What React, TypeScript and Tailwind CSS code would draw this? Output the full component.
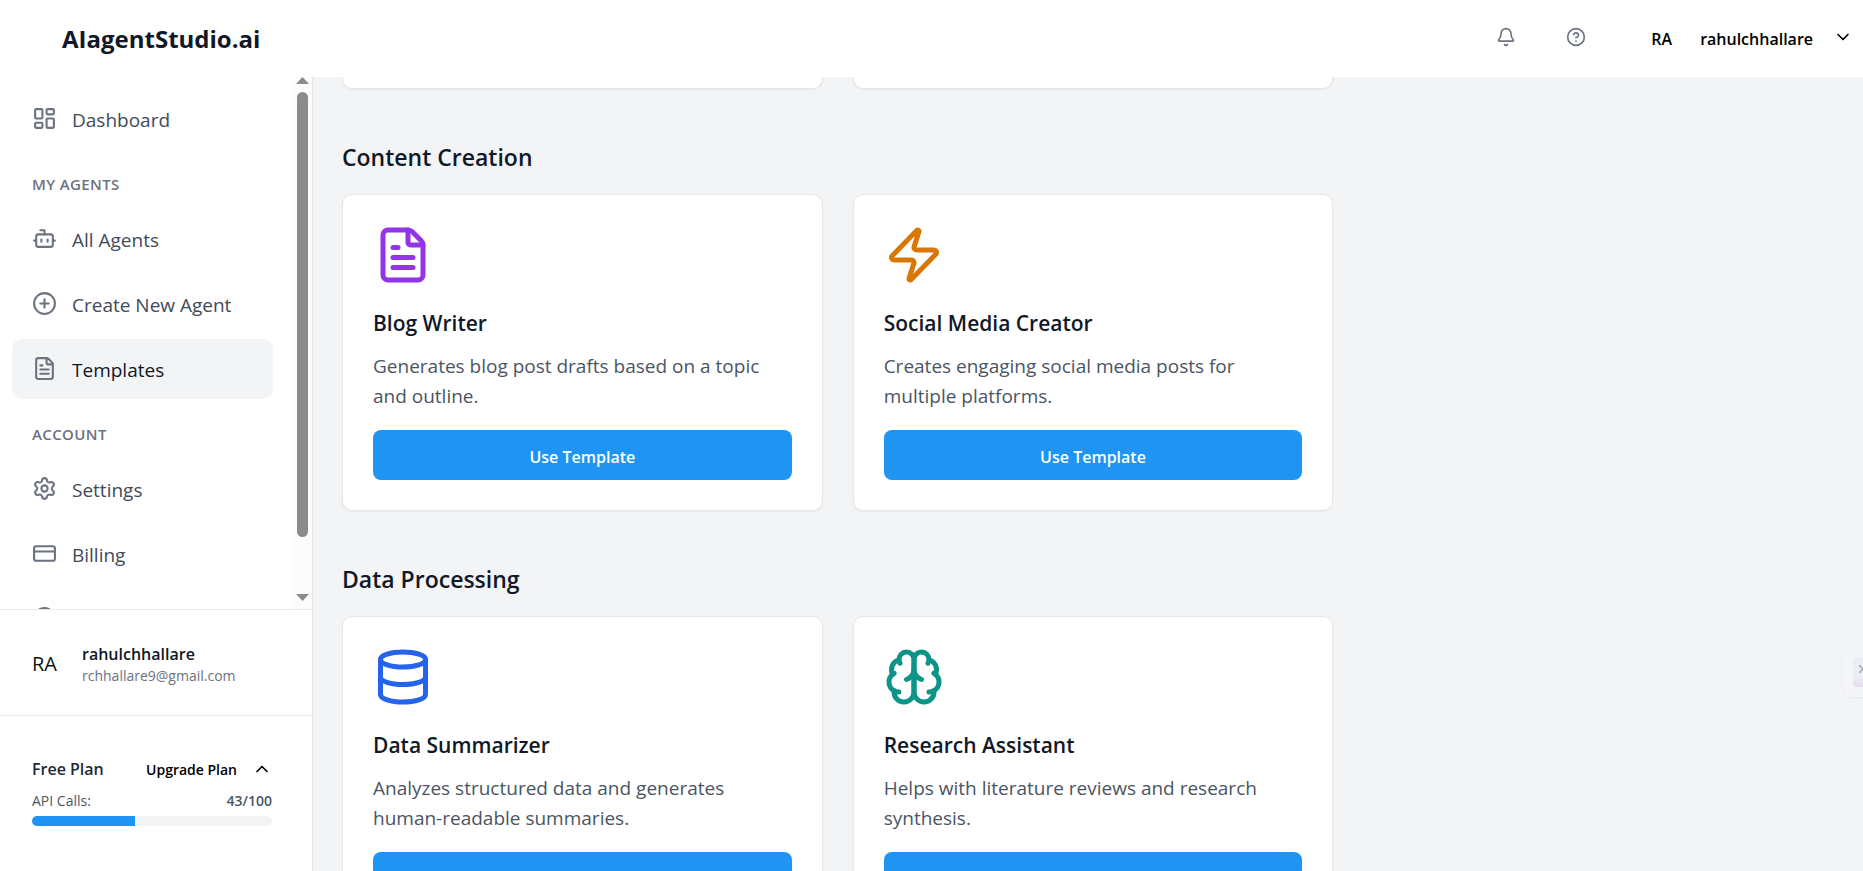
import type { ComponentType, ReactNode } from "react";
import {
  Bell,
  Bot,
  ChevronDown,
  ChevronUp,
  CircleHelp,
  CirclePlus,
  CreditCard,
  Database,
  FileText,
  LayoutDashboard,
  Settings,
  X,
  Zap,
} from "lucide-react";

type IconType = ComponentType<{ size?: number | string; className?: string }>;

type Template = {
  icon: IconType;
  color: string;
  title: string;
  text: string;
};

function BrainIcon({ size = 24, className }: { size?: number | string; className?: string }) {
  return (
    <svg
      width={size}
      height={size}
      viewBox="0 0 24 24"
      fill="none"
      stroke="currentColor"
      strokeWidth="2"
      strokeLinecap="round"
      strokeLinejoin="round"
      className={className}
      aria-hidden="true"
    >
      <path d="M12 5a3 3 0 1 0-5.997.125 4 4 0 0 0-2.526 5.77 4 4 0 0 0 .556 6.588A4 4 0 1 0 12 18Z" />
      <path d="M12 5a3 3 0 1 1 5.997.125 4 4 0 0 1 2.526 5.77 4 4 0 0 1-.556 6.588A4 4 0 1 1 12 18Z" />
      <path d="M15 13a4.5 4.5 0 0 1-3-4 4.5 4.5 0 0 1-3 4" />
      <path d="M17.599 6.5a3 3 0 0 0 .399-1.375" />
      <path d="M6.003 5.125A3 3 0 0 0 6.401 6.5" />
      <path d="M3.477 10.896a4 4 0 0 1 .585-.396" />
      <path d="M19.938 10.5a4 4 0 0 1 .585.396" />
      <path d="M6 18a4 4 0 0 1-1.967-.516" />
      <path d="M19.967 17.484A4 4 0 0 1 18 18" />
    </svg>
  );
}

const sections: { name: string; items: Template[] }[] = [
  {
    name: "Content Creation",
    items: [
      {
        icon: FileText,
        color: "text-[#9333ea]",
        title: "Blog Writer",
        text: "Generates blog post drafts based on a topic and outline.",
      },
      {
        icon: Zap,
        color: "text-[#d97706]",
        title: "Social Media Creator",
        text: "Creates engaging social media posts for multiple platforms.",
      },
    ],
  },
  {
    name: "Data Processing",
    items: [
      {
        icon: Database,
        color: "text-[#2563eb]",
        title: "Data Summarizer",
        text: "Analyzes structured data and generates human-readable summaries.",
      },
      {
        icon: BrainIcon,
        color: "text-[#0d9488]",
        title: "Research Assistant",
        text: "Helps with literature reviews and research synthesis.",
      },
    ],
  },
];

function NavItem({ icon: Icon, label, active = false }: { icon: IconType; label?: string; active?: boolean }) {
  return (
    <a
      href="#"
      aria-label={label ? undefined : "Help"}
      aria-current={active ? "page" : undefined}
      className={
        active
          ? "flex h-[60px] shrink-0 items-center gap-[15px] rounded-[10px] bg-[#f3f4f6] px-5 text-[19px] text-[#111827]"
          : "flex h-[60px] shrink-0 items-center gap-[15px] rounded-[10px] px-5 text-[19px] text-[#414b5a]"
      }
    >
      <Icon size={25} className="mb-[2px] shrink-0 text-[#6b7280]" />
      {label && <span className="pt-[2px]">{label}</span>}
    </a>
  );
}

function NavLabel({ children }: { children: ReactNode }) {
  return (
    <h2 className="px-5 pt-5 pb-[10px] text-[15px] leading-5 font-semibold tracking-wide text-[#6b7280] uppercase">
      {children}
    </h2>
  );
}

function ScrollTrack() {
  return (
    <div className="flex w-[19px] shrink-0 flex-col items-center bg-[#fcfcfc] pb-2" aria-hidden="true">
      <svg width="13" height="7" viewBox="0 0 13 7" fill="#8b8b8b">
        <path d="M6.5 0 13 7H0Z" />
      </svg>
      <div className="mt-2 h-[445px] w-[11px] rounded-full bg-[#8b8b8b]" />
      <svg className="mt-auto" width="13" height="7" viewBox="0 0 13 7" fill="#8b8b8b">
        <path d="M0 0H13L6.5 7Z" />
      </svg>
    </div>
  );
}

function Sidebar() {
  return (
    <aside className="flex w-[313px] shrink-0 flex-col border-r border-[#e5e7eb] bg-white">
      <div className="flex min-h-0 flex-1">
        <nav className="flex min-w-0 flex-1 flex-col gap-[5px] overflow-hidden pt-3 pr-5 pl-3">
          <NavItem icon={LayoutDashboard} label="Dashboard" />
          <NavLabel>My Agents</NavLabel>
          <NavItem icon={Bot} label="All Agents" />
          <NavItem icon={CirclePlus} label="Create New Agent" />
          <NavItem icon={FileText} label="Templates" active />
          <NavLabel>Account</NavLabel>
          <NavItem icon={Settings} label="Settings" />
          <NavItem icon={CreditCard} label="Billing" />
          <NavItem icon={CircleHelp} />
        </nav>
        <ScrollTrack />
      </div>
      <div className="flex h-[106px] items-center gap-[25px] border-t border-[#e5e7eb] px-8 pt-[2px]">
        <span className="text-[20px] text-[#111111]">RA</span>
        <div className="min-w-0">
          <p className="text-[16px] leading-6 font-semibold text-[#111827]">rahulchhallare</p>
          <p className="text-[14px] leading-5 text-[#6b7280]">rchhallare9@gmail.com</p>
        </div>
      </div>
      <div className="border-t border-[#e5e7eb] pt-[39px] pr-10 pb-[45px] pl-8">
        <div className="flex h-7 items-center">
          <span className="text-[16px] font-semibold text-[#1f2937]">Free Plan</span>
          <button type="button" className="ml-auto text-[14px] font-semibold text-black">
            Upgrade Plan
          </button>
          <button type="button" aria-label="Collapse plan" className="ml-[15px] text-black">
            <ChevronUp size={20} />
          </button>
        </div>
        <div className="flex items-center justify-between pt-2 text-[14px] leading-5 text-[#4b5563]">
          <span>API Calls:</span>
          <span className="font-semibold">43/100</span>
        </div>
        <div className="mt-[5px] h-[10px] overflow-hidden rounded-full bg-[#f4f4f4]">
          <div className="h-full w-[43%] bg-[#2094f3]" />
        </div>
      </div>
    </aside>
  );
}

function TemplateCard({ icon: Icon, color, title, text }: Template) {
  return (
    <article className="rounded-[10px] border border-[#e5e7eb] bg-white p-[30px] shadow-xs">
      <Icon size={60} className={color} />
      <h3 className="mt-[21px] text-[21px] leading-[35px] font-semibold text-[#111827]">{title}</h3>
      <p className="mt-[10px] text-[19px] leading-[30px] text-[#4b5563]">{text}</p>
      <button
        type="button"
        className="mt-[19px] h-[50px] w-full rounded-[8px] bg-[#2094f3] pt-1 text-[16px] font-semibold text-white"
      >
        Use Template
      </button>
    </article>
  );
}

export default function App() {
  return (
    <div className="flex h-screen flex-col overflow-hidden bg-[#f3f4f6] font-['Open_Sans',sans-serif]">
      <header className="flex h-[77px] shrink-0 items-center bg-white pr-[10px] pl-[62px]">
        <h1 className="text-[24px] font-bold text-[#111827]">AIagentStudio.ai</h1>
        <div className="ml-auto flex items-center text-[16px] font-semibold text-black">
          <button type="button" aria-label="Notifications" className="pb-[3px] text-[#6b7280]">
            <Bell size={20} />
          </button>
          <button type="button" aria-label="Help" className="ml-[50px] pb-[3px] text-[#6b7280]">
            <CircleHelp size={20} />
          </button>
          <button type="button" className="ml-[65px] flex items-center">
            <span>RA</span>
            <span className="ml-7">rahulchhallare</span>
            <ChevronDown size={20} className="mb-[3px] ml-5" />
          </button>
        </div>
      </header>
      <div className="flex min-h-0 flex-1">
        <Sidebar />
        <main className="relative min-w-0 flex-1 overflow-hidden pr-[19px] pl-[29px]">
          <div className="grid grid-cols-3 gap-[30px]">
            <div className="h-3 rounded-b-[10px] border border-t-0 border-[#e5e7eb] bg-white shadow-xs" />
            <div className="h-3 rounded-b-[10px] border border-t-0 border-[#e5e7eb] bg-white shadow-xs" />
          </div>
          {sections.map((section) => (
            <section key={section.name} className="pt-[51px]">
              <h2 className="text-[23px] leading-[35px] font-semibold text-[#111827]">{section.name}</h2>
              <div className="mt-[19px] grid grid-cols-3 gap-[30px]">
                {section.items.map((item) => (
                  <TemplateCard key={item.title} {...item} />
                ))}
              </div>
            </section>
          ))}
          <button
            type="button"
            aria-label="Close panel"
            className="absolute top-[570px] right-0 flex h-[50px] w-5 items-center justify-end rounded-l-[8px] bg-[#f4f5f7] shadow-xs"
          >
            <span className="flex h-[30px] w-[10px] items-center overflow-hidden rounded-l-[4px] bg-linear-to-b from-[#ebedf4] from-70% to-[#e4daf1] pb-[6px] pl-[3px] text-[#9a9da4]">
              <X size={14} className="shrink-0" />
            </span>
          </button>
        </main>
      </div>
    </div>
  );
}
